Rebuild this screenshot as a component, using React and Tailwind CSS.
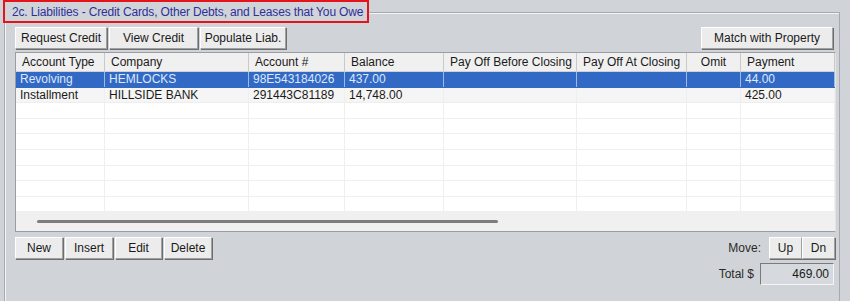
import React from 'react';

const btn =
  'h-[22px] flex items-center justify-center bg-[#ececec] border border-t-white border-l-white border-r-[#a0a0a0] border-b-[#a0a0a0] shadow-[1px_1px_0_#6e6e6e] text-[12px] text-[#1a1a1a] leading-none';

const cols = [
  { label: 'Account Type', w: 'w-[89px]' },
  { label: 'Company', w: 'w-[144px]' },
  { label: 'Account #', w: 'w-[96px]' },
  { label: 'Balance', w: 'w-[99px]' },
  { label: 'Pay Off Before Closing', w: 'w-[133px]' },
  { label: 'Pay Off At Closing', w: 'w-[110px]' },
  { label: 'Omit', w: 'w-[54px]', center: true },
  { label: 'Payment', w: 'w-[94px]' },
];

const rows = [
  ['Revolving', 'HEMLOCKS', '98E543184026', '437.00', '', '', '', '44.00'],
  ['Installment', 'HILLSIDE BANK', '291443C81189', '14,748.00', '', '', '', '425.00'],
  [], [], [], [], [], [], [],
];

const App = () => {
  return (
    <div className="w-[850px] h-[301px] overflow-hidden bg-[#d0d4d8] pt-[12px] pl-[4px] font-['Liberation_Sans',Arial,sans-serif] text-[12px] text-[#1a1a1a]">
      <div className="relative w-[836px] h-[300px] border-l border-t border-r border-[#a6aaae] shadow-[inset_1px_1px_0_#f2f4f6]">
        {/* group caption */}
        <div className="absolute top-[-13px] left-[-2px] w-[366px] h-[23px] border-2 border-[#e3141c] bg-[#d0d4d8] pl-[7px] flex items-center whitespace-nowrap overflow-hidden text-[#2f2f98] tracking-[-0.15px]">
          2c. Liabilities - Credit Cards, Other Debts, and Leases that You Owe
        </div>

        <div className="pl-[10px] pr-[3px] pt-[14px]">
          <div className="flex justify-between">
            <div className="flex gap-[2px]">
              <button className={`${btn} w-[92px]`}>Request Credit</button>
              <button className={`${btn} w-[89px]`}>View Credit</button>
              <button className={`${btn} w-[86px]`}>Populate Liab.</button>
            </div>
            <button className={`${btn} w-[132px] mr-[3px]`}>Match with Property</button>
          </div>

          {/* grid */}
          <div className="mt-[3px] w-[821px] border border-[#9a9ea4] border-r-[#e4e4e4] bg-white">
            <div className="flex h-[19px] bg-[#f0f0f0] border-b border-[#d2d2d2]">
              {cols.map((c) => (
                <div
                  key={c.label}
                  className={`${c.w} shrink-0 h-full flex items-center border-r border-[#c9c9c9] ${c.center ? 'justify-center' : 'pl-[6px]'}`}
                >
                  {c.label}
                </div>
              ))}
            </div>
            {rows.map((r, i) => {
              const sel = i === 0;
              return (
                <div
                  key={i}
                  className={`flex h-[15.6px] border-b ${sel ? 'bg-[#3169c5] text-[#dfe8f8] border-[#3169c5]' : i === 1 ? 'bg-[#f5f5f5] border-[#eeeeee]' : 'bg-white border-[#efefef]'}`}
                >
                  {cols.map((c, j) => (
                    <div
                      key={j}
                      className={`${c.w} shrink-0 h-full flex items-center pl-[4px] border-r ${sel ? 'border-[#9fb8e4]' : 'border-[#efefef]'} leading-none`}
                    >
                      {r[j] || ''}
                    </div>
                  ))}
                </div>
              );
            })}
            <div className="h-[19px] bg-[#f0f0f0] flex items-center pl-[21px]">
              <div className="w-[461px] h-[3px] rounded-full bg-[#7d7d7d]" />
            </div>
          </div>

          <div className="mt-[5px] flex justify-between">
            <div className="flex gap-[2px]">
              <button className={`${btn} w-[48px]`}>New</button>
              <button className={`${btn} w-[48px]`}>Insert</button>
              <button className={`${btn} w-[47px]`}>Edit</button>
              <button className={`${btn} w-[48px]`}>Delete</button>
            </div>
            <div className="flex items-center mr-[1px]">
              <span className="mr-[8px] text-[#2a2a2a]">Move:</span>
              <button className={`${btn} w-[33px]`}>Up</button>
              <button className={`${btn} w-[33px]`}>Dn</button>
            </div>
          </div>

          <div className="mt-[4px] flex justify-end items-center mr-[2px]">
            <span className="mr-[6px] text-[#2a2a2a]">Total $</span>
            <div className="w-[74px] h-[22px] border border-t-[#7a7a7a] border-l-[#7a7a7a] border-r-[#f4f4f4] border-b-[#f4f4f4] bg-[#d6dade] flex items-center justify-end pr-[4px]">
              469.00
            </div>
          </div>
        </div>
      </div>
    </div>
  );
};

export default App;
